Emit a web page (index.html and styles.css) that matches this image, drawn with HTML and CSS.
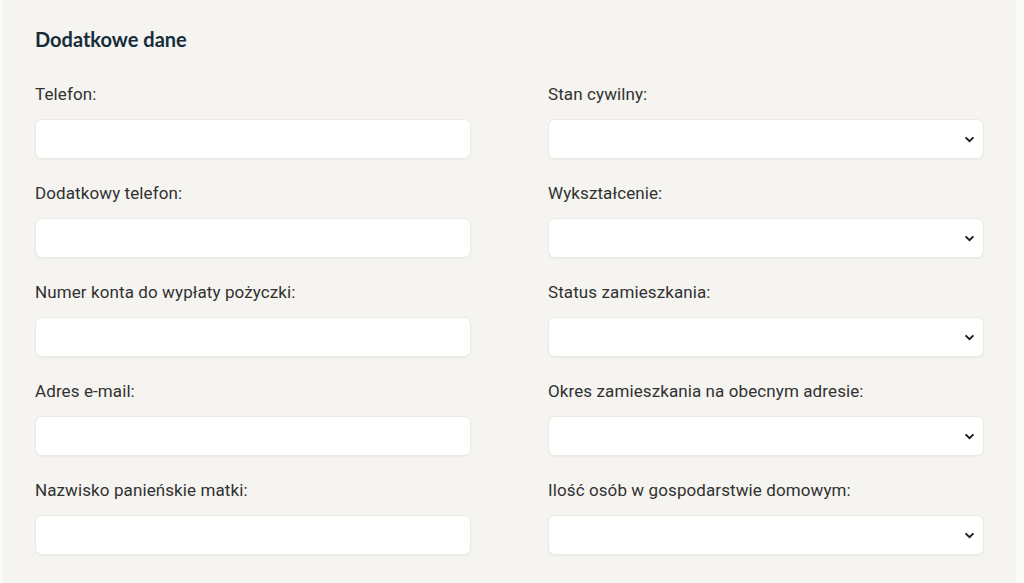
FILE: index.html
```html
<!DOCTYPE html>
<html lang="pl">
<head>
  <meta charset="UTF-8">
  <meta name="viewport" content="width=device-width, initial-scale=1.0">
  <title>Dodatkowe dane</title>
  <link rel="stylesheet" href="styles.css">
</head>
<body>
  <div class="panel">
    <h2 class="title">Dodatkowe dane</h2>
    <form class="form">
      <div class="field">
        <label>Telefon:</label>
        <input type="text" class="input">
      </div>
      <div class="field">
        <label>Stan cywilny:</label>
        <div class="select-wrap">
          <select class="input"></select>
          <svg class="chevron" viewBox="0 0 12 8"><path d="M1.5 1.5 6 6l4.5-4.5"/></svg>
        </div>
      </div>

      <div class="field">
        <label>Dodatkowy telefon:</label>
        <input type="text" class="input">
      </div>
      <div class="field">
        <label>Wykształcenie:</label>
        <div class="select-wrap">
          <select class="input"></select>
          <svg class="chevron" viewBox="0 0 12 8"><path d="M1.5 1.5 6 6l4.5-4.5"/></svg>
        </div>
      </div>

      <div class="field">
        <label>Numer konta do wypłaty pożyczki:</label>
        <input type="text" class="input">
      </div>
      <div class="field">
        <label>Status zamieszkania:</label>
        <div class="select-wrap">
          <select class="input"></select>
          <svg class="chevron" viewBox="0 0 12 8"><path d="M1.5 1.5 6 6l4.5-4.5"/></svg>
        </div>
      </div>

      <div class="field">
        <label>Adres e-mail:</label>
        <input type="email" class="input">
      </div>
      <div class="field">
        <label>Okres zamieszkania na obecnym adresie:</label>
        <div class="select-wrap">
          <select class="input"></select>
          <svg class="chevron" viewBox="0 0 12 8"><path d="M1.5 1.5 6 6l4.5-4.5"/></svg>
        </div>
      </div>

      <div class="field">
        <label>Nazwisko panieńskie matki:</label>
        <input type="text" class="input">
      </div>
      <div class="field">
        <label>Ilość osób w gospodarstwie domowym:</label>
        <div class="select-wrap">
          <select class="input"></select>
          <svg class="chevron" viewBox="0 0 12 8"><path d="M1.5 1.5 6 6l4.5-4.5"/></svg>
        </div>
      </div>
    </form>
  </div>
</body>
</html>
```

FILE: styles.css
```css
* {
  margin: 0;
  padding: 0;
  box-sizing: border-box;
}

body, html {
  height: 100%;
  width: 100%;
  background-color: #fafaf8;
  font-family: Roboto, Arial, sans-serif;
  overflow: hidden;
}

.panel {
  width: 1013px;
  height: 100%;
  margin-left: 3px;
  background-color: #f5f4f0;
  padding: 27px 32px;
}

.title {
  font-family: Lato, Arial, sans-serif;
  font-size: 20px;
  line-height: 24px;
  font-weight: bold;
  color: #152c3a;
  margin-bottom: 33px;
}

.form {
  display: grid;
  grid-template-columns: 436px 436px;
  column-gap: 77px;
  row-gap: 24px;
}

.field {
  display: flex;
  flex-direction: column;
}

.field label {
  font-size: 17px;
  line-height: 20px;
  letter-spacing: 0.1px;
  color: #313131;
  margin-bottom: 15px;
}

.input {
  width: 100%;
  height: 40px;
  border: 1px solid #ebe9e4;
  border-radius: 7px;
  background-color: #fff;
  outline: none;
  font-size: 15px;
  font-family: Roboto, Arial, sans-serif;
  padding: 0 14px;
  appearance: none;
  -webkit-appearance: none;
  box-shadow: 0 1px 2px rgba(0, 0, 0, 0.04);
}

.select-wrap {
  position: relative;
}

.chevron {
  position: absolute;
  right: 9px;
  top: 17px;
  width: 11px;
  height: 7px;
  fill: none;
  stroke: #1c1c1c;
  stroke-width: 2.2;
  pointer-events: none;
}
```
